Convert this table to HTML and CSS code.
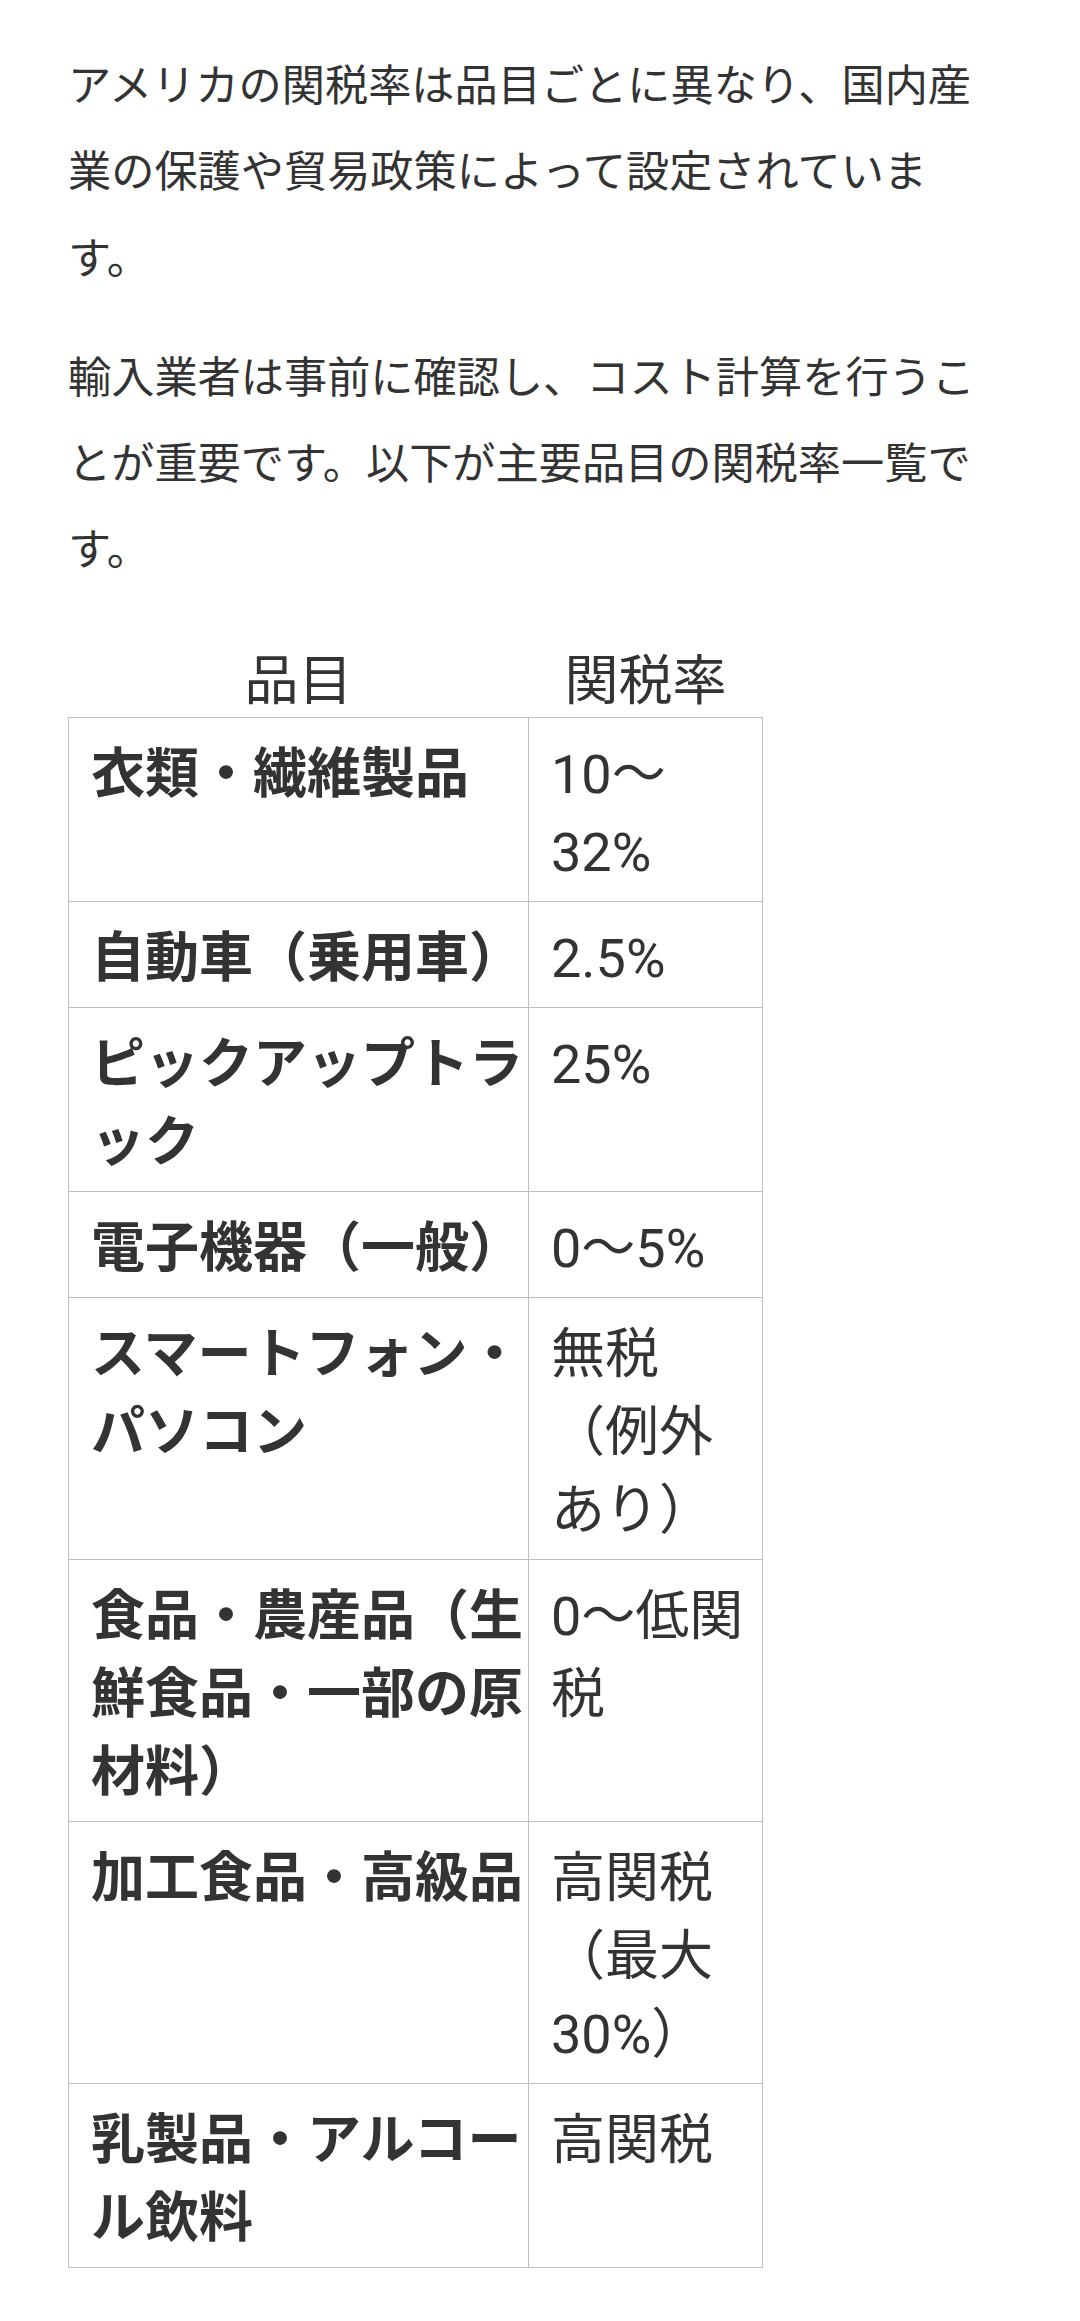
FILE: index.html
```html
<!DOCTYPE html>
<html lang="ja">
<head>
    <meta charset="UTF-8">
    <meta name="viewport" content="width=device-width, initial-scale=1.0">
    <title>アメリカの関税率</title>
    <link rel="stylesheet" href="styles.css">
</head>
<body>
    <div class="article">
        <p>アメリカの関税率は品目ごとに異なり、国内産業の保護や貿易政策によって設定されています。</p>
        <p>輸入業者は事前に確認し、コスト計算を行うことが重要です。以下が主要品目の関税率一覧です。</p>

        <table class="rates">
            <colgroup>
                <col class="col-item">
                <col class="col-rate">
            </colgroup>
            <thead>
                <tr><th>品目</th><th>関税率</th></tr>
            </thead>
            <tbody>
                <tr><td>衣類・繊維製品</td><td>10～32%</td></tr>
                <tr><td>自動車（乗用車）</td><td>2.5%</td></tr>
                <tr><td>ピックアップトラック</td><td>25%</td></tr>
                <tr><td>電子機器（一般）</td><td>0～5%</td></tr>
                <tr><td>スマートフォン・パソコン</td><td>無税（例外あり）</td></tr>
                <tr><td>食品・農産品（生鮮食品・一部の原材料）</td><td>0～低関税</td></tr>
                <tr><td>加工食品・高級品</td><td>高関税（最大30%）</td></tr>
                <tr><td>乳製品・アルコール飲料</td><td>高関税</td></tr>
            </tbody>
        </table>
    </div>
</body>
</html>
```
FILE: styles.css
```css
body {
    margin: 0;
    font-family: Roboto, "Noto Sans CJK JP", sans-serif;
    color: #333;
    background-color: #fff;
}
.article {
    padding: 44px 90px 44px 68px;
}
.article p {
    font-size: 43.2px;
    line-height: 86.4px;
    margin: 0 0 32.4px;
    text-spacing-trim: space-all;
}
.rates {
    border-collapse: collapse;
    table-layout: fixed;
    width: 694px;
    margin-top: 55px;
    font-size: 54px;
    line-height: 77.76px;
}
.col-item {
    width: 460px;
}
.col-rate {
    width: 234px;
}
.rates th {
    font-weight: normal;
    line-height: 64px;
    padding: 0 0 3px;
    text-align: center;
}
.rates td {
    border: 1px solid #bfbfbf;
    padding: 18px 3px 9.5px 22px;
    vertical-align: top;
}
.rates td:first-child {
    font-weight: bold;
}
```
